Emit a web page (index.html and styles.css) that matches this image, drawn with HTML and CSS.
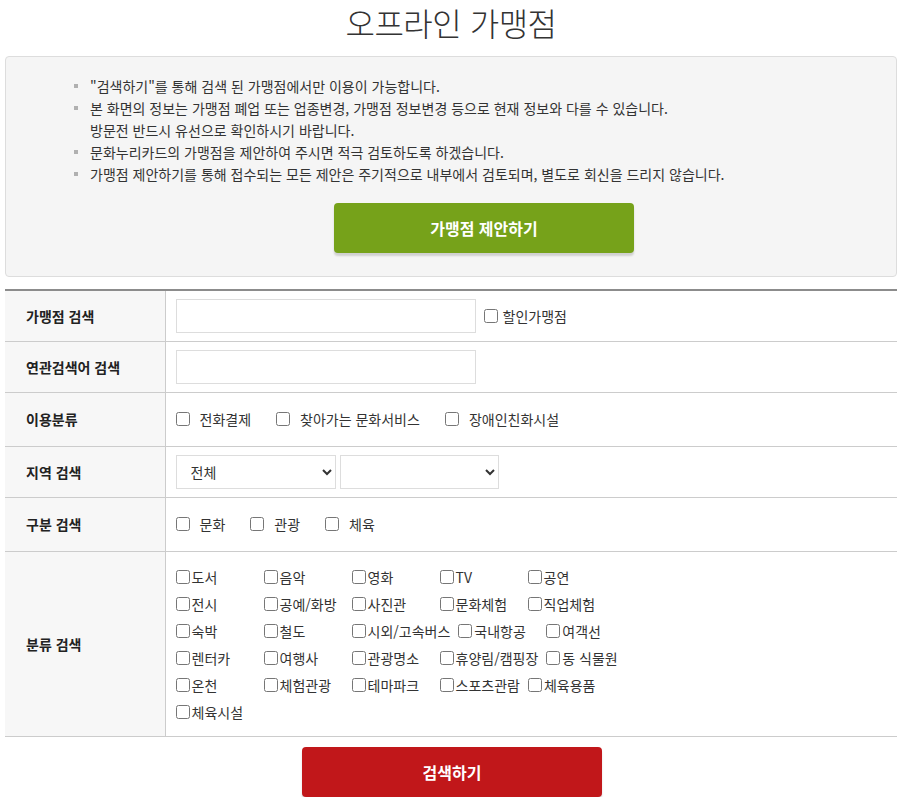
FILE: index.html
```html
<!DOCTYPE html>
<html lang="ko">
<head>
<meta charset="utf-8">
<title>오프라인 가맹점</title>
<link rel="stylesheet" href="styles.css">
</head>
<body>
<div class="page">
  <h1 class="title">오프라인 가맹점</h1>

  <div class="notice">
    <ul class="notice-list">
      <li>"검색하기"를 통해 검색 된 가맹점에서만 이용이 가능합니다.</li>
      <li>본 화면의 정보는 가맹점 폐업 또는 업종변경, 가맹점 정보변경 등으로 현재 정보와 다를 수 있습니다.<br>방문전 반드시 유선으로 확인하시기 바랍니다.</li>
      <li>문화누리카드의 가맹점을 제안하여 주시면 적극 검토하도록 하겠습니다.</li>
      <li>가맹점 제안하기를 통해 접수되는 모든 제안은 주기적으로 내부에서 검토되며, 별도로 회신을 드리지 않습니다.</li>
    </ul>
    <div class="btn-wrap notice-btn">
      <button class="btn btn-green" type="button">가맹점 제안하기</button>
    </div>
  </div>

  <table class="search-table">
    <tr class="row-input">
      <th>가맹점 검색</th>
      <td>
        <div class="inline">
          <input class="text-input" type="text">
          <label class="discount"><input type="checkbox">할인가맹점</label>
        </div>
      </td>
    </tr>
    <tr class="row-input">
      <th>연관검색어 검색</th>
      <td><input class="text-input" type="text"></td>
    </tr>
    <tr class="row-check">
      <th>이용분류</th>
      <td>
        <div class="check-group">
          <label class="chk"><input type="checkbox">전화결제</label>
          <label class="chk"><input type="checkbox">찾아가는 문화서비스</label>
          <label class="chk"><input type="checkbox">장애인친화시설</label>
        </div>
      </td>
    </tr>
    <tr class="row-input">
      <th>지역 검색</th>
      <td>
        <div class="inline selects">
          <select class="sel"><option>전체</option></select>
          <select class="sel"><option></option></select>
        </div>
      </td>
    </tr>
    <tr class="row-check">
      <th>구분 검색</th>
      <td>
        <div class="check-group">
          <label class="chk"><input type="checkbox">문화</label>
          <label class="chk"><input type="checkbox">관광</label>
          <label class="chk"><input type="checkbox">체육</label>
        </div>
      </td>
    </tr>
    <tr class="row-cat">
      <th>분류 검색</th>
      <td>
        <div class="cat-row">
          <label class="cat"><input type="checkbox">도서</label>
          <label class="cat"><input type="checkbox">음악</label>
          <label class="cat"><input type="checkbox">영화</label>
          <label class="cat"><input type="checkbox">TV</label>
          <label class="cat"><input type="checkbox">공연</label>
        </div>
        <div class="cat-row">
          <label class="cat"><input type="checkbox">전시</label>
          <label class="cat"><input type="checkbox">공예/화방</label>
          <label class="cat"><input type="checkbox">사진관</label>
          <label class="cat"><input type="checkbox">문화체험</label>
          <label class="cat"><input type="checkbox">직업체험</label>
        </div>
        <div class="cat-row">
          <label class="cat"><input type="checkbox">숙박</label>
          <label class="cat"><input type="checkbox">철도</label>
          <label class="cat"><input type="checkbox">시외/고속버스</label>
          <label class="cat"><input type="checkbox">국내항공</label>
          <label class="cat"><input type="checkbox">여객선</label>
        </div>
        <div class="cat-row">
          <label class="cat"><input type="checkbox">렌터카</label>
          <label class="cat"><input type="checkbox">여행사</label>
          <label class="cat"><input type="checkbox">관광명소</label>
          <label class="cat"><input type="checkbox">휴양림/캠핑장</label>
          <label class="cat"><input type="checkbox">동 식물원</label>
        </div>
        <div class="cat-row">
          <label class="cat"><input type="checkbox">온천</label>
          <label class="cat"><input type="checkbox">체험관광</label>
          <label class="cat"><input type="checkbox">테마파크</label>
          <label class="cat"><input type="checkbox">스포츠관람</label>
          <label class="cat"><input type="checkbox">체육용품</label>
        </div>
        <div class="cat-row">
          <label class="cat"><input type="checkbox">체육시설</label>
        </div>
      </td>
    </tr>
  </table>

  <div class="btn-wrap search-wrap">
    <button class="btn btn-red" type="button">검색하기</button>
  </div>
</div>
</body>
</html>
```

FILE: styles.css
```css
* {
  box-sizing: border-box;
}

html, body {
  margin: 0;
  padding: 0;
  background: #ffffff;
}

body {
  font-family: "Noto Sans CJK KR", "Noto Sans", "Liberation Sans", sans-serif;
  font-size: 14px;
  color: #333333;
}

.page {
  width: 892px;
  margin-left: 5px;
}

.title {
  margin: 0;
  height: 44px;
  line-height: 44px;
  text-align: center;
  font-size: 32px;
  font-weight: 300;
  color: #333333;
  letter-spacing: -0.5px;
}

.notice {
  margin-top: 12px;
  background: #f5f5f5;
  border: 1px solid #dddddd;
  border-radius: 4px;
  padding: 18px 0 23px;
}

.notice-list {
  list-style: none;
  margin: 0;
  padding: 0 0 0 84px;
}

.notice-list li {
  position: relative;
  line-height: 22px;
  font-size: 14px;
  color: #333333;
}

.notice-list li::before {
  content: "";
  position: absolute;
  left: -16px;
  top: 9px;
  width: 4px;
  height: 4px;
  background: #b0b0b0;
}

.btn-wrap {
  display: flex;
  justify-content: center;
}

.notice-btn {
  margin-top: 18px;
  padding-left: 66px;
}

.btn {
  width: 300px;
  height: 50px;
  border: 0;
  border-radius: 4px;
  color: #ffffff;
  font-family: inherit;
  font-size: 16px;
  font-weight: 700;
  cursor: pointer;
  box-shadow: 0 3px 2px rgba(0, 0, 0, 0.15);
}

.btn-green {
  background: #76a21a;
}

.btn-red {
  background: #c1171a;
}

.search-wrap {
  margin-top: 10px;
  padding-left: 2px;
}

.search-table {
  width: 892px;
  margin-top: 12px;
  border-collapse: collapse;
  border-top: 2px solid #8c8c8c;
}

.search-table th,
.search-table td {
  border-bottom: 1px solid #cccccc;
  padding: 0;
  vertical-align: middle;
}

.search-table th {
  width: 160px;
  background: #f7f7f7;
  border-right: 1px solid #cccccc;
  text-align: left;
  padding-left: 21px;
  font-size: 14px;
  font-weight: 700;
  color: #222222;
}

.search-table td {
  padding-left: 10px;
}

.row-input td {
  height: 51px;
  padding-top: 1px;
}

.row-input:first-child td {
  height: 51px;
  padding-top: 0;
}

.row-check td {
  height: 54px;
}

.row-cat td {
  height: 185px;
  padding-top: 11px;
  padding-bottom: 10px;
}

.inline {
  display: flex;
  align-items: center;
}

.text-input {
  width: 300px;
  height: 34px;
  border: 1px solid #dddddd;
  background: #ffffff;
  margin: 0;
  padding: 0 10px;
  font-family: inherit;
  font-size: 14px;
}

.discount {
  display: flex;
  align-items: center;
  margin-left: 8px;
  color: #333333;
}

.discount input {
  margin: 0 5px 0 0;
  width: 14px;
  height: 14px;
}

.check-group {
  display: flex;
  align-items: center;
}

.chk {
  display: flex;
  align-items: center;
  margin-right: 25px;
  color: #333333;
}

.chk input {
  margin: 0 10px 0 0;
  width: 14px;
  height: 14px;
}

.selects {
  gap: 4px;
}

.sel {
  width: 160px;
  height: 34px;
  border: 1px solid #dddddd;
  background: #ffffff;
  margin: 0;
  padding: 0 0 0 10px;
  font-family: inherit;
  font-size: 14px;
  color: #333333;
}

.sel + .sel {
  width: 159px;
}

.cat-row {
  display: flex;
  align-items: center;
  height: 27px;
}

.cat {
  display: flex;
  align-items: center;
  min-width: 80px;
  margin-right: 8px;
  white-space: nowrap;
  color: #333333;
}

.cat input {
  margin: 0 2px 0 0;
  width: 14px;
  height: 14px;
}
```
